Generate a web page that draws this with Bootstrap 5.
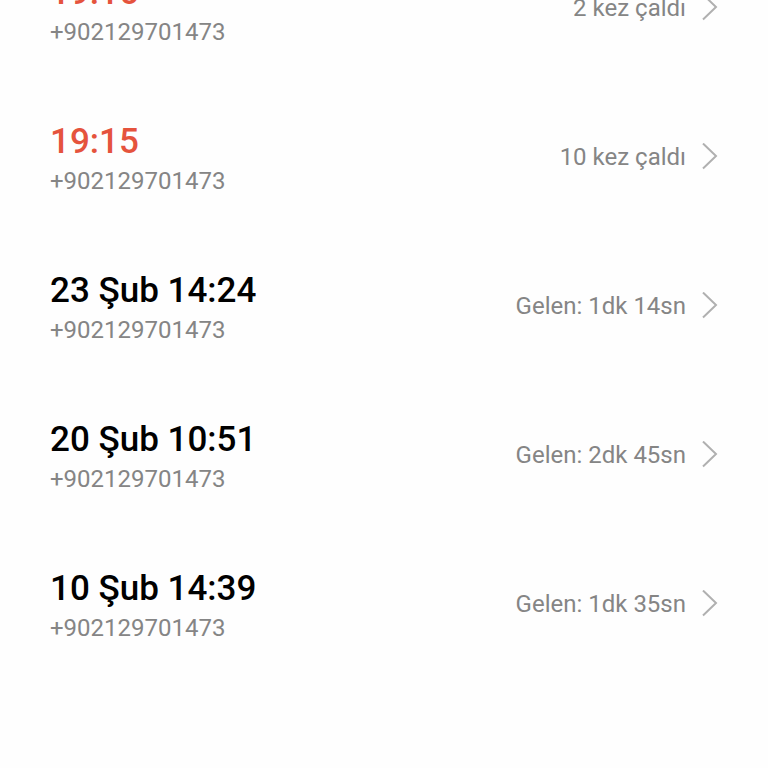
<!DOCTYPE html>
<html lang="tr">
<head>
<meta charset="utf-8">
<meta name="viewport" content="width=device-width, initial-scale=1">
<title>Arama geçmişi</title>
<link href="https://cdn.jsdelivr.net/npm/bootstrap@5.3.0/dist/css/bootstrap.min.css" rel="stylesheet">
<style>
body { font-family: Roboto, sans-serif; background: #fefefe; }
.call-log { overflow: hidden; }
/* the list is scrolled, so its first row starts above the viewport */
.call-list { margin-top: -67px; }
.call-row { min-height: 149px; padding: 0 50px; background: transparent; color: #000; }
.call-time { font-size: 35px; line-height: 48px; font-weight: 500; }
.call-missed { color: #e5533d; }
.call-number { font-size: 24px; line-height: 30px; color: #858585; }
.call-info { font-size: 24px; line-height: 36px; color: #858585; }
.chevron { width: 16px; height: 28px; fill: none; stroke: #b0b0b0; stroke-width: 2; }
</style>
<script src="https://cdn.jsdelivr.net/npm/bootstrap@5.3.0/dist/js/bootstrap.bundle.min.js" defer></script>
</head>
<body>
<main class="call-log">
<ul class="call-list list-unstyled mb-0">
<li><a href="#" class="call-row d-flex align-items-center justify-content-between text-decoration-none"><span class="d-flex flex-column"><span class="call-time call-missed">19:16</span><span class="call-number">+902129701473</span></span><span class="d-flex align-items-center gap-3"><span class="call-info">2 kez çaldı</span><svg class="chevron" viewBox="0 0 16 28" aria-hidden="true"><path d="M1 .5 14 13 1 25.5"/></svg></span></a></li>
<li><a href="#" class="call-row d-flex align-items-center justify-content-between text-decoration-none"><span class="d-flex flex-column"><span class="call-time call-missed">19:15</span><span class="call-number">+902129701473</span></span><span class="d-flex align-items-center gap-3"><span class="call-info">10 kez çaldı</span><svg class="chevron" viewBox="0 0 16 28" aria-hidden="true"><path d="M1 .5 14 13 1 25.5"/></svg></span></a></li>
<li><a href="#" class="call-row d-flex align-items-center justify-content-between text-decoration-none"><span class="d-flex flex-column"><span class="call-time">23 Şub 14:24</span><span class="call-number">+902129701473</span></span><span class="d-flex align-items-center gap-3"><span class="call-info">Gelen: 1dk 14sn</span><svg class="chevron" viewBox="0 0 16 28" aria-hidden="true"><path d="M1 .5 14 13 1 25.5"/></svg></span></a></li>
<li><a href="#" class="call-row d-flex align-items-center justify-content-between text-decoration-none"><span class="d-flex flex-column"><span class="call-time">20 Şub 10:51</span><span class="call-number">+902129701473</span></span><span class="d-flex align-items-center gap-3"><span class="call-info">Gelen: 2dk 45sn</span><svg class="chevron" viewBox="0 0 16 28" aria-hidden="true"><path d="M1 .5 14 13 1 25.5"/></svg></span></a></li>
<li><a href="#" class="call-row d-flex align-items-center justify-content-between text-decoration-none"><span class="d-flex flex-column"><span class="call-time">10 Şub 14:39</span><span class="call-number">+902129701473</span></span><span class="d-flex align-items-center gap-3"><span class="call-info">Gelen: 1dk 35sn</span><svg class="chevron" viewBox="0 0 16 28" aria-hidden="true"><path d="M1 .5 14 13 1 25.5"/></svg></span></a></li>
</ul>
</main>
</body>
</html>
